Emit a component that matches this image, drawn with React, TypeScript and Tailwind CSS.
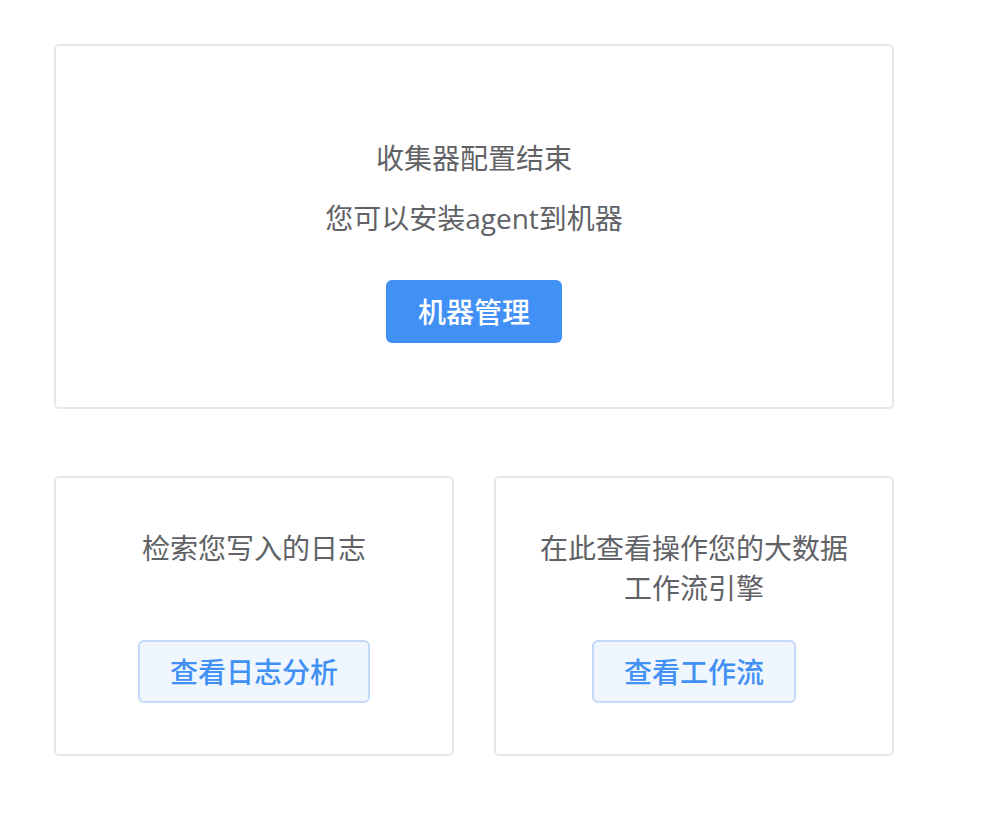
const font = "font-['Open_Sans','Noto_Sans_CJK_SC',sans-serif]"

export default function App() {
  return (
    <div className={`min-h-screen w-full bg-white pl-[54px] pt-[44px] ${font}`}>
      <div className="flex w-[840px] flex-col gap-[67px]">
        {/* Top card */}
        <div className="flex h-[365px] flex-col items-center rounded-[5px] border-2 border-[#e6e8ee] pt-[92px]">
          <p className="text-[28px] leading-[40px] text-[#606266]">收集器配置结束</p>
          <p className="mt-[20px] text-[28px] leading-[40px] text-[#606266]">您可以安装agent到机器</p>
          <button className="mt-[42px] h-[63px] rounded-[6px] bg-[#4190f5] px-[32px] text-[28px] font-medium text-white">
            机器管理
          </button>
        </div>

        {/* Bottom cards */}
        <div className="flex gap-[40px]">
          <div className="flex h-[280px] w-[400px] flex-col items-center rounded-[5px] border-2 border-[#e6e8ee] pt-[50px]">
            <div className="h-[80px] text-center text-[28px] leading-[40px] text-[#606266]">
              检索您写入的日志
            </div>
            <button className="mt-[32px] h-[63px] rounded-[6px] border-2 border-[#c2d9f7] bg-[#eff6fe] px-[30px] text-[28px] font-medium text-[#4190f5]">
              查看日志分析
            </button>
          </div>
          <div className="flex h-[280px] w-[400px] flex-col items-center rounded-[5px] border-2 border-[#e6e8ee] pt-[50px]">
            <div className="h-[80px] text-center text-[28px] leading-[40px] text-[#606266]">
              在此查看操作您的大数据
              <br />
              工作流引擎
            </div>
            <button className="mt-[32px] h-[63px] rounded-[6px] border-2 border-[#c2d9f7] bg-[#eff6fe] px-[30px] text-[28px] font-medium text-[#4190f5]">
              查看工作流
            </button>
          </div>
        </div>
      </div>
    </div>
  )
}
